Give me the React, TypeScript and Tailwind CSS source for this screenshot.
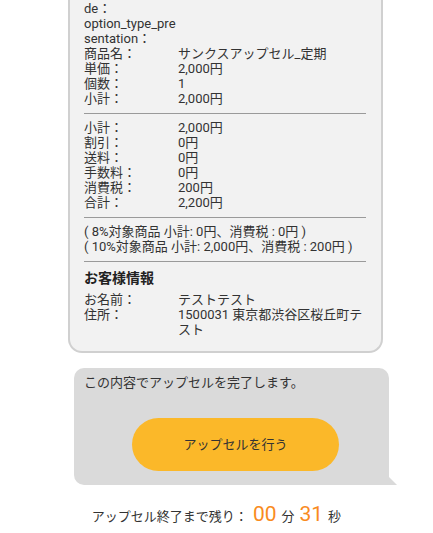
import React from 'react'

const font = { fontFamily: 'Roboto, "Noto Sans CJK JP", sans-serif' }

const Row = ({ label, value }: { label: React.ReactNode; value: React.ReactNode }) => (
    <div className="flex">
        <div className="w-[94px] shrink-0">{label}</div>
        <div className="flex-1">{value}</div>
    </div>
)

const Divider = () => <div className="h-px bg-[#9a9a9a] mt-[7px] mb-[6px]" />

const App = () => {
    return (
        <div className="w-[433px] h-[533px] bg-white overflow-hidden text-[#333]" style={font}>
            <div className="ml-[68px] w-[315px] bg-[#f2f2f2] border-2 border-t-0 border-[#d0d0d0] rounded-b-[14px] pl-[14px] pr-[15px] pt-px pb-[14px] text-[13px] leading-[15px]">
                <Row label="de：" value="" />
                <Row label="option_type_pre" value="" />
                <Row label="sentation：" value="" />
                <Row label="商品名：" value="サンクスアップセル_定期" />
                <Row label="単価：" value="2,000円" />
                <Row label="個数：" value="1" />
                <Row label="小計：" value="2,000円" />
                <Divider />
                <Row label="小計：" value="2,000円" />
                <Row label="割引：" value="0円" />
                <Row label="送料：" value="0円" />
                <Row label="手数料：" value="0円" />
                <Row label="消費税：" value="200円" />
                <Row label="合計：" value="2,200円" />
                <Divider />
                <div className="mt-[3px] mb-[2px]">
                    <div>( 8%対象商品 小計: 0円、消費税 : 0円 )</div>
                    <div>( 10%対象商品 小計: 2,000円、消費税 : 200円 )</div>
                </div>
                <Divider />
                <div className="font-bold text-[14px] leading-[20px] mt-px mb-[4px] text-[#222]">お客様情報</div>
                <Row label="お名前：" value="テストテスト" />
                <Row label="住所：" value="1500031 東京都渋谷区桜丘町テスト" />
            </div>

            <div className="relative ml-[74px] mt-[15px] w-[315px] bg-[#dadada] rounded-[10px] rounded-br-none pt-[7px] pb-[14px] pl-[10px] text-[13px] leading-[15px]">
                <div>この内容でアップセルを完了します。</div>
                <button className="mt-[28px] ml-[48px] w-[207px] h-[53px] rounded-full bg-[#fbb829] text-[13px] text-[#333]">
                    アップセルを行う
                </button>
                <svg className="absolute right-[-8px] bottom-0" width="8" height="8" viewBox="0 0 8 8">
                    <polygon points="0,0 8,8 0,8" fill="#dadada" />
                </svg>
            </div>

            <div className="mt-[14px] flex items-baseline justify-center text-[13px]">
                <span>アップセル終了まで残り：</span>
                <span className="text-[#f98b1e] text-[21px] mx-[5px]">00</span>
                <span>分</span>
                <span className="text-[#f98b1e] text-[21px] mx-[5px]">31</span>
                <span>秒</span>
            </div>
        </div>
    )
}

export default App
